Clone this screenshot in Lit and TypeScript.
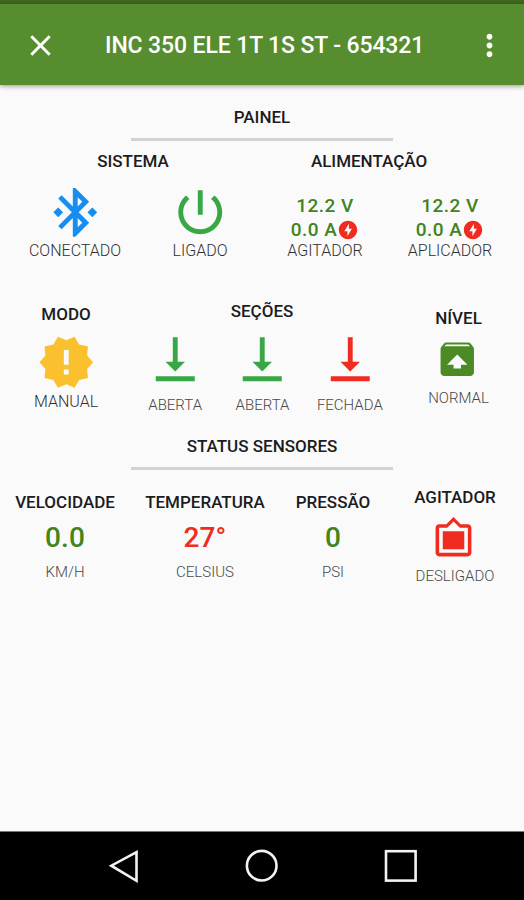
import { LitElement, html, css, svg } from "lit";
import { customElement, property } from "lit/decorators.js";

const ICONS: Record<string, string> = {
  bluetooth:
    "M7 12l-2-2-2 2 2 2 2-2zm10.71-4.29L12 2h-1v7.59L6.41 5 5 6.41 10.59 12 5 17.59 6.41 19 11 14.41V22h1l5.71-5.71-4.3-4.29 4.3-4.29zM13 5.83l1.88 1.88L13 9.59V5.83zm1.88 10.46L13 18.17v-3.76l1.88 1.88zM19 10l-2 2 2 2 2-2-2-2z",
  power:
    "M13 3h-2v10h2V3zm4.83 2.17l-1.42 1.42C17.99 7.86 19 9.81 19 12c0 3.87-3.13 7-7 7s-7-3.13-7-7c0-2.19 1.01-4.14 2.58-5.42L6.17 5.17C4.23 6.82 3 9.26 3 12c0 4.97 4.03 9 9 9s9-4.03 9-9c0-2.74-1.23-5.18-3.17-6.83z",
  bolt:
    "M12 2C6.48 2 2 6.48 2 12s4.48 10 10 10 10-4.48 10-10S17.52 2 12 2zM11.4 18.8v-5.4H8L13 5.2v5.4h3.2z",
  alert:
    "M23 12l-2.44-2.78.34-3.68-3.61-.82-1.89-3.18L12 3 8.6 1.54 6.71 4.72l-3.61.81.34 3.68L1 12l2.44 2.78-.34 3.69 3.61.82 1.89 3.18L12 21l3.4 1.46 1.89-3.18 3.61-.82-.34-3.68L23 12zm-10 5h-2v-2h2v2zm0-4h-2V7h2v6z",
  down: "M16 13h-3V3h-2v10H8l4 4 4-4zM4 19v2h16v-2H4z",
  level:
    "M20.55 5.22l-1.39-1.68C18.88 3.21 18.47 3 18 3H6c-.47 0-.88.21-1.15.55L3.46 5.22C3.17 5.57 3 6.01 3 6.5V19c0 1.1.89 2 2 2h14c1.1 0 2-.9 2-2V6.5c0-.49-.17-.93-.45-1.28zM12 9.5l5.5 5.5H14v2h-4v-2H6.5L12 9.5zM5.12 5l.82-1h12l.93 1H5.12z",
  frame:
    "M20 4h-4l-4-4-4 4H4c-1.1 0-2 .9-2 2v14c0 1.1.9 2 2 2h16c1.1 0 2-.9 2-2V6c0-1.1-.9-2-2-2zm0 16H4V6h4.52l3.52-3.5L15.52 6H20v14zM18 8H6v10h12z",
  close:
    "M19 6.41L17.59 5 12 10.59 6.41 5 5 6.41 10.59 12 5 17.59 6.41 19 12 13.41 17.59 19 19 17.59 13.41 12z",
  more:
    "M12 8c1.1 0 2-.9 2-2s-.9-2-2-2-2 .9-2 2 .9 2 2 2zm0 2c-1.1 0-2 .9-2 2s.9 2 2 2 2-.9 2-2-.9-2-2-2zm0 6c-1.1 0-2 .9-2 2s.9 2 2 2 2-.9 2-2-.9-2-2-2z",
};

@customElement("ui-icon")
class UiIcon extends LitElement {
  @property() name = "";
  static styles = css`
    :host { display: block; flex: none; }
    svg { display: block; width: 100%; height: 100%; fill: currentColor; }
  `;
  render() {
    return html`<svg viewBox="0 0 24 24">${svg`<path d=${ICONS[this.name]}></path>`}</svg>`;
  }
}

@customElement("app-root")
class AppRoot extends LitElement {
  static styles = css`
    :host {
      display: flex; flex-direction: column; height: 900px; width: 524px;
      overflow: hidden; background: #fafafa; color: #1c1c1c;
      font-family: Roboto, sans-serif; white-space: nowrap;
    }
    * { box-sizing: border-box; }
    .status { height: 4px; background: #41691f; flex: none; }
    .bar {
      height: 81px; flex: none; display: flex; align-items: center;
      background: #568d2f; color: #fff; box-shadow: 0 1px 5px rgba(0,0,0,.42);
      padding: 1px 17px 0 23px; z-index: 1;
    }
    .close { width: 35px; height: 35px; }
    .more { width: 35px; height: 35px; }
    .title { flex: 1; margin-left: 47px; font-size: 23px; font-weight: 500; letter-spacing: -.12px; }
    main { flex: 1; display: flex; flex-direction: column; }
    .section {
      width: 262px; margin: 0 auto; text-align: center; font-size: 17px; font-weight: 500;
      line-height: 20px; border-bottom: 3px solid #d2d2d2;
    }
    .painel { margin-top: 22px; height: 34px; }
    .sensores { margin-top: 21px; height: 34px; }
    .h { font-size: 17px; font-weight: 500; line-height: 20px; text-align: center; }
    .heads { display: grid; grid-template-columns: 236px 236px; margin: 10px 0 0 15px; }
    .row4 { display: grid; grid-template-columns: repeat(4, 125px); margin: 12px 0 0 12.5px; height: 77px; }
    .row3 { display: grid; grid-template-columns: 131px 262px 131px; margin-top: 41px; height: 114px; }
    .sensors { display: grid; grid-template-columns: 130px 150px 106px 138px; margin-top: 17px; }
    .cell { display: flex; flex-direction: column; align-items: center; }
    .cell > * { flex: none; }
    .lbl { font-size: 16px; font-weight: 300; line-height: 18px; color: #303030; }
    .dim { font-size: 15px; color: #484848; }
    .big { width: 58.5px; height: 58.5px; }
    .mid { width: 44.5px; height: 44.5px; }
    .agit { width: 43px; height: 43px; }
    .small { width: 22px; height: 22px; margin-left: 0; }
    .v { font-size: 19px; font-weight: 500; line-height: 24px; letter-spacing: .5px; color: #3f8420; display: flex; align-items: center; height: 24px; }
    .v:first-child { margin-top: 11px; }
    .row4 .lbl { margin-top: auto; }
    .blue { color: #168df0; }
    .green { color: #37a845; }
    .leaf { color: #4b8a24; }
    .amber { color: #fbc02d; }
    .red { color: #f02c20; }
    .num { font-size: 28px; font-weight: 500; line-height: 34px; margin-top: 9px; color: #43851b; letter-spacing: .1px; }
    .num.red { color: #f02c20; }
    .modo { padding: 3px 0 0 1px; }
    .modo .big { margin-top: 9px; }
    .modo .lbl { margin-top: 1px; }
    .trio { display: grid; grid-template-columns: repeat(3, 1fr); margin: 9px -.5px 0 .5px; }
    .trio .lbl { margin-top: 7px; }
    .nivel { padding-top: 7px; }
    .nivel .mid { margin: 9px 3px 0 0; }
    .nivel .lbl { margin-top: 7px; }
    .s { padding-top: 5px; }
    .s .lbl { margin-top: 8px; }
    .agitador .agit { margin: 9.5px 4px 0 0; }
    .agitador .lbl { margin-top: 7.5px; }
    .nav { height: 69px; flex: none; background: #000; border-top: 1px solid #777; display: block; }
    .nav svg { display: block; width: 524px; height: 68px; fill: none; stroke: #f2f2f2; stroke-width: 2.6; }
  `;

  volts(label: string) {
    return html`<div class="cell">
      <div class="v">12.2 V</div>
      <div class="v">0.0 A<ui-icon class="small red" name="bolt"></ui-icon></div>
      <div class="lbl">${label}</div>
    </div>`;
  }
  valve(label: string, tone: string) {
    return html`<div class="cell">
      <ui-icon class="big ${tone}" name="down"></ui-icon>
      <div class="lbl dim">${label}</div>
    </div>`;
  }
  sensor(head: string, value: string, unit: string, tone = "") {
    return html`<div class="cell s">
      <div class="h">${head}</div>
      <div class="num ${tone}">${value}</div>
      <div class="lbl dim">${unit}</div>
    </div>`;
  }

  render() {
    return html`
      <div class="status"></div>
      <header class="bar">
        <ui-icon class="close" name="close"></ui-icon>
        <div class="title">INC 350 ELE 1T 1S ST - 654321</div>
        <ui-icon class="more" name="more"></ui-icon>
      </header>
      <main>
        <div class="section painel">PAINEL</div>
        <div class="heads"><div class="h">SISTEMA</div><div class="h">ALIMENTAÇÃO</div></div>
        <div class="row4">
          <div class="cell"><ui-icon class="big blue" name="bluetooth"></ui-icon><div class="lbl">CONECTADO</div></div>
          <div class="cell"><ui-icon class="big green" name="power"></ui-icon><div class="lbl">LIGADO</div></div>
          ${this.volts("AGITADOR")} ${this.volts("APLICADOR")}
        </div>
        <div class="row3">
          <div class="cell modo">
            <div class="h">MODO</div>
            <ui-icon class="big amber" name="alert"></ui-icon>
            <div class="lbl">MANUAL</div>
          </div>
          <div>
            <div class="h">SEÇÕES</div>
            <div class="trio">
              ${this.valve("ABERTA", "green")} ${this.valve("ABERTA", "green")} ${this.valve("FECHADA", "red")}
            </div>
          </div>
          <div class="cell nivel">
            <div class="h">NÍVEL</div>
            <ui-icon class="mid leaf" name="level"></ui-icon>
            <div class="lbl dim">NORMAL</div>
          </div>
        </div>
        <div class="section sensores">STATUS SENSORES</div>
        <div class="sensors">
          ${this.sensor("VELOCIDADE", "0.0", "KM/H")}
          ${this.sensor("TEMPERATURA", "27°", "CELSIUS", "red")}
          ${this.sensor("PRESSÃO", "0", "PSI")}
          <div class="cell agitador">
            <div class="h">AGITADOR</div>
            <ui-icon class="agit red" name="frame"></ui-icon>
            <div class="lbl dim">DESLIGADO</div>
          </div>
        </div>
      </main>
      <nav class="nav">
        <svg viewBox="0 0 524 68">
          <path d="M136.5 20.2v28.6L111.3 33.7z"></path>
          <circle cx="261.7" cy="33.7" r="14.8"></circle>
          <rect x="386" y="19.2" width="29.6" height="29.4"></rect>
        </svg>
      </nav>
    `;
  }
}
